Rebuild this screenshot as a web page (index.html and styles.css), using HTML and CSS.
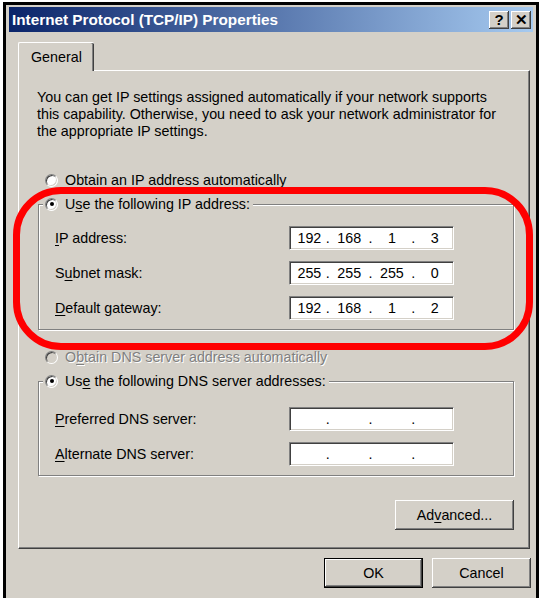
FILE: index.html
```html
<!DOCTYPE html>
<html lang="en">
<head>
<meta charset="UTF-8">
<title>Internet Protocol (TCP/IP) Properties</title>
<link rel="stylesheet" href="styles.css">
</head>
<body>
<div class="window">
    <div class="titlebar">
        <span class="title">Internet Protocol (TCP/IP) Properties</span>
        <div class="title-buttons">
            <span class="tbtn">?</span>
            <span class="tbtn">✕</span>
        </div>
    </div>

    <div class="tabs">
        <div class="tab">General</div>
    </div>

    <div class="panel">
        <p class="intro">You can get IP settings assigned automatically if your network supports<br>this capability. Otherwise, you need to ask your network administrator for<br>the appropriate IP settings.</p>

        <div class="option first">
            <span class="radio"></span>
            <span><u>O</u>btain an IP address automatically</span>
        </div>

        <fieldset class="group">
            <legend class="option">
                <span class="radio checked"></span>
                <span>U<u>s</u>e the following IP address:</span>
            </legend>
            <div class="row">
                <label><u>I</u>P address:</label>
                <div class="ipbox">
                    <span class="seg s1">192</span><span class="dot">.</span><span class="seg">168</span><span class="dot">.</span><span class="seg">1</span><span class="dot">.</span><span class="seg">3</span>
                </div>
            </div>
            <div class="row">
                <label>S<u>u</u>bnet mask:</label>
                <div class="ipbox">
                    <span class="seg s1">255</span><span class="dot">.</span><span class="seg">255</span><span class="dot">.</span><span class="seg">255</span><span class="dot">.</span><span class="seg">0</span>
                </div>
            </div>
            <div class="row">
                <label><u>D</u>efault gateway:</label>
                <div class="ipbox">
                    <span class="seg s1">192</span><span class="dot">.</span><span class="seg">168</span><span class="dot">.</span><span class="seg">1</span><span class="dot">.</span><span class="seg">2</span>
                </div>
            </div>
        </fieldset>

        <div class="option disabled">
            <span class="radio"></span>
            <span>O<u>b</u>tain DNS server address automatically</span>
        </div>

        <fieldset class="group dns">
            <legend class="option">
                <span class="radio checked"></span>
                <span>Us<u>e</u> the following DNS server addresses:</span>
            </legend>
            <div class="row">
                <label><u>P</u>referred DNS server:</label>
                <div class="ipbox">
                    <span class="seg s1"></span><span class="dot">.</span><span class="seg"></span><span class="dot">.</span><span class="seg"></span><span class="dot">.</span><span class="seg"></span>
                </div>
            </div>
            <div class="row">
                <label><u>A</u>lternate DNS server:</label>
                <div class="ipbox">
                    <span class="seg s1"></span><span class="dot">.</span><span class="seg"></span><span class="dot">.</span><span class="seg"></span><span class="dot">.</span><span class="seg"></span>
                </div>
            </div>
        </fieldset>

        <div class="advanced-row">
            <button class="btn advanced">Ad<u>v</u>anced...</button>
        </div>
    </div>

    <div class="footer">
        <button class="btn default">OK</button>
        <button class="btn">Cancel</button>
    </div>
</div>

<!-- red highlight drawn over the static IP group -->
<div class="highlight"></div>
</body>
</html>
```

FILE: styles.css
```css
html, body {
    margin: 0;
    padding: 0;
    background-color: #fff;
    overflow: hidden;
}

body {
    width: 542px;
    height: 598px;
    position: relative;
    font-family: 'Liberation Sans', Arial, sans-serif;
    font-size: 14.3px;
    color: #000;
}

u {
    text-decoration: underline;
    text-underline-offset: 2px;
}

.window {
    box-sizing: border-box;
    width: 536px;
    height: 620px;
    margin: 2px 0 0 3px;
    border: 3px solid #000;
    border-bottom: none;
    padding: 2px 3px 0 3px;
    background-color: #d4d0c8;
}

/* title bar */
.titlebar {
    height: 25px;
    display: flex;
    align-items: center;
    justify-content: space-between;
    padding: 0 2px 0 3px;
    background: linear-gradient(to right, #0a246a, #a6caf0);
}

.title {
    color: #fff;
    font-weight: bold;
    font-size: 15.3px;
}

.title-buttons {
    display: flex;
    gap: 2px;
}

.tbtn {
    width: 20px;
    height: 18px;
    display: flex;
    align-items: center;
    justify-content: center;
    background-color: #d4d0c8;
    font-weight: bold;
    font-size: 15px;
    box-shadow: inset -1px -1px 0 #404040, inset 1px 1px 0 #fff, inset -2px -2px 0 #808080;
}

/* tab */
.tabs {
    display: flex;
    margin: 10px 0 0 9px;
}

.tab {
    position: relative;
    z-index: 1;
    height: 28px;
    line-height: 28px;
    padding: 0 12px;
    margin-bottom: -1px;
    background-color: #d4d0c8;
    border-top: 1px solid #fff;
    border-left: 1px solid #fff;
    border-radius: 2px 2px 0 0;
    box-shadow: inset -1px 0 0 #404040, inset -2px 0 0 #808080;
}

.panel {
    margin: 0 3px 0 9px;
    height: 479px;
    box-sizing: border-box;
    border-top: 1px solid #fff;
    border-left: 1px solid #fff;
    border-right: 1px solid #404040;
    border-bottom: 1px solid #404040;
    box-shadow: inset -1px -1px 0 #808080;
    padding: 0 15px 0 19px;
}

.intro {
    margin: 18px 0 0 -1px;
    line-height: 17px;
}

/* radio options */
.option {
    display: flex;
    align-items: center;
    gap: 7px;
    height: 20px;
    padding: 0 0 0 7px;
}

.option.first {
    margin-top: 30px;
}

.radio {
    box-sizing: border-box;
    width: 13px;
    height: 13px;
    border-radius: 50%;
    background-color: #fff;
    border: 1px solid;
    border-color: #808080 #fff #fff #808080;
    box-shadow: inset 1px 1px 0 #404040, inset -1px -1px 0 #d4d0c8;
    display: flex;
    align-items: center;
    justify-content: center;
}

.radio.checked::after {
    content: '';
    width: 4px;
    height: 4px;
    border-radius: 50%;
    background-color: #000;
}

.disabled {
    margin-top: 17px;
    color: #808080;
    text-shadow: 1px 1px 0 #fff;
}

.disabled .radio {
    background-color: #d4d0c8;
}

/* group boxes */
.group {
    margin: 4px 0 0 0;
    padding: 1px 16px 9px 16px;
    border: 1px solid #808080;
    box-shadow: inset 1px 1px 0 #fff, 1px 1px 0 #fff;
    min-width: 0;
}

.group legend.option {
    margin-left: -12px;
    padding: 0 3px 0 2px;
    background-color: #d4d0c8;
    gap: 7px;
}

.row {
    display: flex;
    align-items: center;
    margin-top: 11px;
}

.dns .row:first-of-type {
    margin-top: 15px;
}

.row label {
    width: 234px;
}

.ipbox {
    box-sizing: border-box;
    width: 165px;
    height: 24px;
    display: flex;
    align-items: center;
    background-color: #fff;
    border: 1px solid;
    border-color: #808080 #fff #fff #808080;
    box-shadow: inset 1px 1px 0 #404040, inset -1px -1px 0 #d4d0c8;
    padding-left: 1px;
}

.seg {
    width: 37px;
    text-align: center;
}

.seg.s1 {
    width: 34px;
    padding-left: 3px;
    box-sizing: border-box;
}

.dot {
    width: 6px;
    text-align: center;
}

/* buttons */
.btn {
    box-sizing: border-box;
    height: 30px;
    font-family: 'Liberation Sans', Arial, sans-serif;
    font-size: 14.3px;
    color: #000;
    background-color: #d4d0c8;
    border: none;
    padding: 0;
    box-shadow: inset -1px -1px 0 #404040, inset 1px 1px 0 #fff, inset -2px -2px 0 #808080;
}

.advanced-row {
    display: flex;
    justify-content: flex-end;
    margin-top: 24px;
}

.advanced {
    width: 119px;
}

.footer {
    display: flex;
    justify-content: flex-end;
    gap: 9px;
    margin: 9px 2px 0 0;
}

.footer .btn {
    width: 99px;
}

.btn.default {
    border: 1px solid #000;
}

/* red highlight */
.highlight {
    position: absolute;
    left: 13px;
    top: 187px;
    width: 520px;
    height: 163px;
    box-sizing: border-box;
    border: 7px solid #f00;
    border-radius: 48px;
}
```
